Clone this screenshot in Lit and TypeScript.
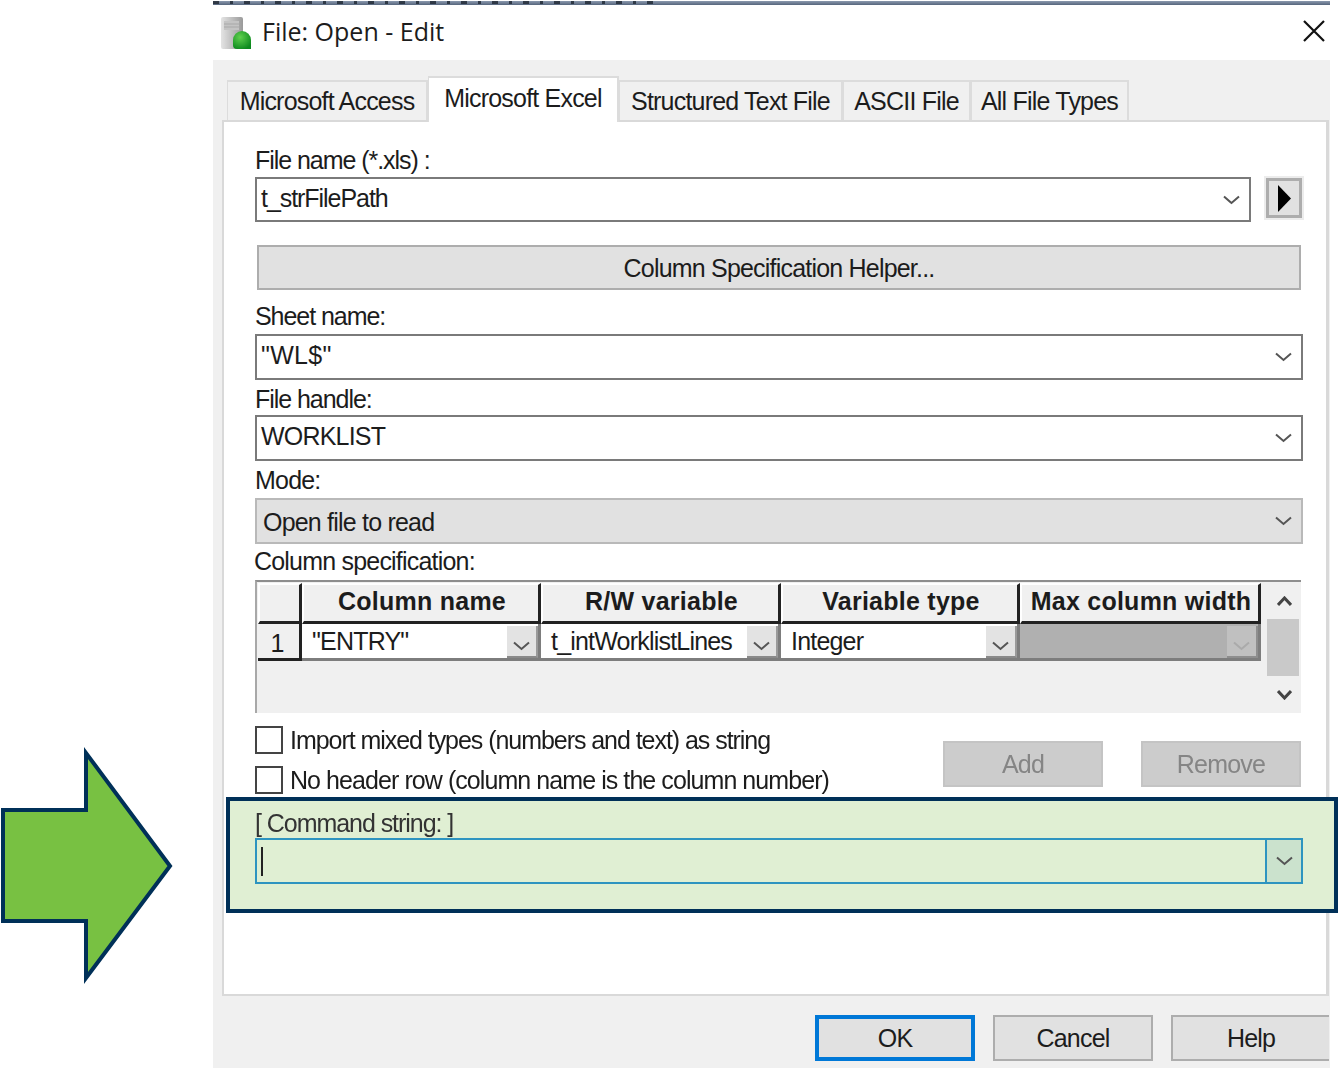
import { LitElement, html, css, svg } from 'lit';
import { customElement } from 'lit/decorators.js';

const chevron = svg`<path d="M1 1.5 L8.5 8 L16 1.5" fill="none" stroke="currentColor" stroke-width="2"/>`;

const chev = () =>
  html`<svg class="chev" width="17" height="10" viewBox="0 0 17 10">${chevron}</svg>`;

const tabs = [
  { text: 'Microsoft Access', width: 201 },
  { text: 'Microsoft Excel', width: 191, active: true },
  { text: 'Structured Text File', width: 224 },
  { text: 'ASCII File', width: 128 },
  { text: 'All File Types', width: 158 },
];

const columns = ['Column name', 'R/W variable', 'Variable type', 'Max column width'];

const cells = [
  { text: '"ENTRY"' },
  { text: 't_intWorklistLines' },
  { text: 'Integer' },
  { text: '', off: true },
];

@customElement('app-root')
export class AppRoot extends LitElement {
  static styles = css`
    :host {
      display: flex;
      width: 1339px;
      height: 1068px;
      overflow: hidden;
      background: #fff;
      color: #1c1c1c;
      font-family: 'Liberation Sans', Arial, sans-serif;
      font-size: 25px;
      letter-spacing: -0.8px;
    }
    .tight {
      letter-spacing: -1.05px;
    }
    .left {
      flex: 0 0 213px;
      padding-top: 745px;
      box-sizing: border-box;
    }
    .arrow {
      display: block;
    }
    .dialog {
      flex: 0 0 1117px;
      height: 1068px;
      display: flex;
      flex-direction: column;
      filter: blur(0.4px);
    }
    .strip {
      height: 4px;
      margin-top: 1px;
      background: linear-gradient(#8b99ae, #56657c);
    }
    .strip i {
      display: block;
      width: 450px;
      height: 3px;
      background: repeating-linear-gradient(90deg, #1e2530 0 6px, transparent 6px 17px, #1e2530 17px 20px, transparent 20px 31px);
      opacity: 0.8;
    }
    .title {
      height: 55px;
      box-sizing: border-box;
      display: flex;
      align-items: center;
      padding: 0 4px 4px 7px;
      background: #fff;
      font-family: 'Open Sans', 'Liberation Sans', sans-serif;
      font-size: 25px;
      letter-spacing: 0;
    }
    .title .icon {
      margin-top: 4px;
    }
    .title .name {
      margin-left: 11px;
      flex: 1;
    }
    .tabs-area {
      flex: 1;
      display: flex;
      flex-direction: column;
      background: #f0f0f0;
      padding-left: 9px;
      min-height: 0;
    }
    .tabs {
      display: flex;
      align-items: flex-end;
      height: 60px;
      padding-left: 5px;
      position: relative;
      z-index: 1;
    }
    .tab {
      height: 40px;
      box-sizing: border-box;
      border: 2px solid #dcdcdc;
      border-bottom: none;
      border-left-width: 1px;
      display: flex;
      align-items: center;
      justify-content: center;
    }
    .tab.active {
      height: 46px;
      background: #fff;
      margin-bottom: -2px;
      padding-bottom: 4px;
    }
    .panel {
      height: 876px;
      width: 1107px;
      box-sizing: border-box;
      background: #fff;
      border: 2px solid #d9d9d9;
      border-right-width: 3px;
      padding: 25px 23px 0 31px;
      display: flex;
      flex-direction: column;
    }
    .label {
      display: flex;
      align-items: center;
      line-height: 1;
    }
    .h-file { height: 30px; padding-bottom: 3px; box-sizing: border-box; }
    .h-sheet { height: 44px; padding-top: 9px; box-sizing: border-box; }
    .h-handle { height: 35px; padding-top: 4px; box-sizing: border-box; }
    .h-mode { height: 37px; padding-top: 2px; box-sizing: border-box; }
    .h-spec { height: 36px; margin-left: -1px; padding-bottom: 2px; box-sizing: border-box; }
    .row {
      display: flex;
      justify-content: space-between;
    }
    .combo {
      box-sizing: border-box;
      height: 46px;
      display: flex;
      align-items: center;
      border: 2px solid #7a7a7a;
      background: #fff;
      padding: 0 9px 0 4px;
    }
    .combo .val {
      flex: 1;
      padding-bottom: 3px;
    }
    .combo .val.quoted {
      letter-spacing: 0.3px;
    }
    .combo .chev {
      color: #555;
    }
    .combo.grey {
      background: #e1e1e1;
      border-color: #b9b9b9;
      padding-left: 6px;
    }
    .combo.grey .val {
      padding: 2px 0 0;
    }
    .combo.file {
      width: 996px;
      height: 45px;
    }
    .play {
      box-sizing: border-box;
      width: 36px;
      height: 40px;
      margin: 1px 1px 0 0;
      border: 3px solid #adadad;
      outline: 2px solid #ececec;
      background: #e1e1e1;
      display: flex;
      align-items: center;
      justify-content: center;
    }
    .btn {
      box-sizing: border-box;
      height: 46px;
      background: #e1e1e1;
      border: 2px solid #adadad;
      display: flex;
      align-items: center;
      justify-content: center;
    }
    .helper {
      margin: 23px 2px 0 2px;
      height: 45px;
      padding-top: 1px;
    }
    .table {
      box-sizing: border-box;
      width: 1046px;
      height: 133px;
      display: flex;
      background: #f0f0f0;
      border-top: 2px solid #8e8e8e;
      border-left: 2px solid #a8a8a8;
    }
    .grid {
      width: 1006px;
      padding: 1px 0 0 1px;
      display: grid;
      grid-template-columns: 44px 239px 240px 239px 241px;
      grid-template-rows: 41px 37px;
      align-content: start;
    }
    .head {
      box-sizing: border-box;
      background: #f0f0f0;
      border: 2px solid #fff;
      border-right: 3px solid #222;
      border-bottom: 3px solid #222;
      padding: 0 0 3px 2px;
      display: flex;
      align-items: center;
      justify-content: center;
      font-weight: bold;
      letter-spacing: 0.25px;
      white-space: nowrap;
    }
    .num {
      box-sizing: border-box;
      background: #f0f0f0;
      border-right: 3px solid #222;
      border-bottom: 3px solid #222;
      display: flex;
      align-items: center;
      justify-content: center;
      padding: 4px 3px 0 0;
    }
    .cell {
      box-sizing: border-box;
      background: #fff;
      border-right: 3px solid #7d7d7d;
      border-bottom: 3px solid #7d7d7d;
      display: flex;
      align-items: center;
      justify-content: space-between;
      padding-left: 10px;
      white-space: nowrap;
    }
    .cell.off {
      background: #b0b0b0;
    }
    .drop {
      box-sizing: border-box;
      width: 31px;
      height: 32px;
      flex: none;
      margin-top: 2px;
      background: #e3e3e3;
      border-right: 2px solid #9a9a9a;
      border-bottom: 2px solid #8a8a8a;
      display: flex;
      align-items: flex-end;
      justify-content: center;
      padding-bottom: 5px;
      color: #555;
    }
    .off .drop {
      background: #c0c0c0;
      color: #aaa;
      border-color: #8e8e8e;
    }
    .scroll {
      margin-left: 3px;
      width: 34px;
      display: flex;
      flex-direction: column;
      align-items: center;
    }
    .scroll .end {
      flex: 1;
      display: flex;
      align-items: center;
      justify-content: center;
    }
    .scroll .thumb {
      align-self: stretch;
      height: 57px;
      margin-right: 2px;
      background: #c9c9c9;
    }
    .scroll svg {
      stroke: #444;
    }
    .options {
      height: 84px;
      display: flex;
      justify-content: space-between;
    }
    .checks {
      padding-top: 13px;
      display: flex;
      flex-direction: column;
      gap: 12px;
    }
    .check {
      height: 28px;
      display: flex;
      align-items: center;
      gap: 7px;
    }
    .check.second {
      letter-spacing: -0.93px;
    }
    .box {
      box-sizing: border-box;
      width: 28px;
      height: 28px;
      border: 2px solid #444;
      background: #fff;
    }
    .actions {
      display: flex;
      gap: 38px;
      padding-top: 28px;
      margin-right: 2px;
    }
    .btn.dis {
      width: 160px;
      background: #cccccc;
      border-color: #c4c4c4;
      color: #858585;
    }
    .hilite {
      box-sizing: border-box;
      height: 116px;
      margin: 0 -35px 0 -29px;
      padding: 7px 31px 0 25px;
      background: #e0efd3;
      border: 4px solid #003058;
    }
    .hilite .label {
      height: 30px;
      color: #333;
    }
    .combo.cmd {
      height: 46px;
      background: transparent;
      border-color: #2e94c0;
      padding: 0 0 0 4px;
    }
    .combo.cmd .val {
      padding: 0;
    }
    .caret {
      display: block;
      width: 2px;
      height: 29px;
      background: #222;
    }
    .cmd .arr {
      box-sizing: border-box;
      width: 36px;
      height: 100%;
      flex: none;
      background: #cbe2cd;
      border-left: 2px solid #2e94c0;
      display: flex;
      align-items: center;
      justify-content: center;
    }
    .foot {
      height: 71px;
      display: flex;
      gap: 18px;
      padding: 19px 0 0 593px;
      box-sizing: border-box;
    }
    .foot .btn {
      width: 160px;
    }
    .foot .btn:last-child {
      width: 158px;
      border-right: none;
    }
    .foot .ok {
      border: 4px solid #0078d7;
    }
  `;

  render() {
    return html`
      <div class="left">
        <svg class="arrow" width="213" height="243" viewBox="0 0 213 243">
          <polygon
            points="3,65 86,65 86,8 170,121 86,233 86,176 3,176"
            fill="#78c142"
            stroke="#003058"
            stroke-width="4"
          />
        </svg>
      </div>
      <div class="dialog">
        <div class="strip"><i></i></div>
        <div class="title">
          <svg class="icon" width="31" height="34" viewBox="0 0 31 34">
            <defs>
              <linearGradient id="doc" x1="0" x2="1" y1="0" y2="0">
                <stop offset="0" stop-color="#e4e4e4" />
                <stop offset="1" stop-color="#9a9a9a" />
              </linearGradient>
              <radialGradient id="ball" cx="0.4" cy="0.35" r="0.7">
                <stop offset="0" stop-color="#5fd04e" />
                <stop offset="1" stop-color="#0d8a1e" />
              </radialGradient>
            </defs>
            <rect x="1" y="1" width="22" height="32" rx="2" fill="url(#doc)" />
            <rect x="4" y="5" width="15" height="9" fill="#c4c4c4" />
            <path d="M4 8h15M4 11h15" stroke="#a8a8a8" />
            <path d="M13 24 a9 9 0 0 1 18 0 v9 h-14 a4 4 0 0 1 -4 -4 Z" fill="url(#ball)" />
          </svg>
          <span class="name">File: Open - Edit</span>
          <svg width="24" height="24" viewBox="0 0 24 24">
            <path d="M2 2 L22 22 M22 2 L2 22" stroke="#111" stroke-width="2.2" />
          </svg>
        </div>
        <div class="tabs-area">
          <div class="tabs">
            ${tabs.map(
              (t) => html`<div class="tab ${t.active ? 'active' : ''}" style="width:${t.width}px">${t.text}</div>`,
            )}
          </div>
          <div class="panel">
            <div class="label h-file tight">File name (*.xls) :</div>
            <div class="row">
              <div class="combo file"><span class="val tight">t_strFilePath</span>${chev()}</div>
              <div class="play">
                <svg width="13" height="27" viewBox="0 0 13 27"><path d="M0 0 L13 13.5 L0 27 Z" fill="#000" /></svg>
              </div>
            </div>
            <div class="btn helper">Column Specification Helper...</div>
            <div class="label h-sheet tight">Sheet name:</div>
            <div class="combo"><span class="val quoted">"WL$"</span>${chev()}</div>
            <div class="label h-handle tight">File handle:</div>
            <div class="combo"><span class="val">WORKLIST</span>${chev()}</div>
            <div class="label h-mode">Mode:</div>
            <div class="combo grey"><span class="val">Open file to read</span>${chev()}</div>
            <div class="label h-spec">Column specification:</div>
            <div class="table">
              <div class="grid">
                <div class="head"></div>
                ${columns.map((c) => html`<div class="head">${c}</div>`)}
                <div class="num">1</div>
                ${cells.map(
                  (c) => html`<div class="cell ${c.off ? 'off' : ''}">
                    <span>${c.text}</span>
                    <div class="drop">${chev()}</div>
                  </div>`,
                )}
              </div>
              <div class="scroll">
                <div class="end">
                  <svg width="15" height="10" viewBox="0 0 15 10"><path d="M1 9 L7.5 2 L14 9" fill="none" stroke-width="3" /></svg>
                </div>
                <div class="thumb"></div>
                <div class="end">
                  <svg width="15" height="10" viewBox="0 0 15 10"><path d="M1 1 L7.5 8 L14 1" fill="none" stroke-width="3" /></svg>
                </div>
              </div>
            </div>
            <div class="options">
              <div class="checks">
                <div class="check tight"><div class="box"></div>Import mixed types (numbers and text) as string</div>
                <div class="check second"><div class="box"></div>No header row (column name is the column number)</div>
              </div>
              <div class="actions">
                <div class="btn dis">Add</div>
                <div class="btn dis">Remove</div>
              </div>
            </div>
            <div class="hilite">
              <div class="label tight">[ Command string: ]</div>
              <div class="combo cmd">
                <span class="val"><span class="caret"></span></span>
                <div class="arr">${chev()}</div>
              </div>
            </div>
          </div>
          <div class="foot">
            <div class="btn ok">OK</div>
            <div class="btn">Cancel</div>
            <div class="btn">Help</div>
          </div>
        </div>
      </div>
    `;
  }
}
